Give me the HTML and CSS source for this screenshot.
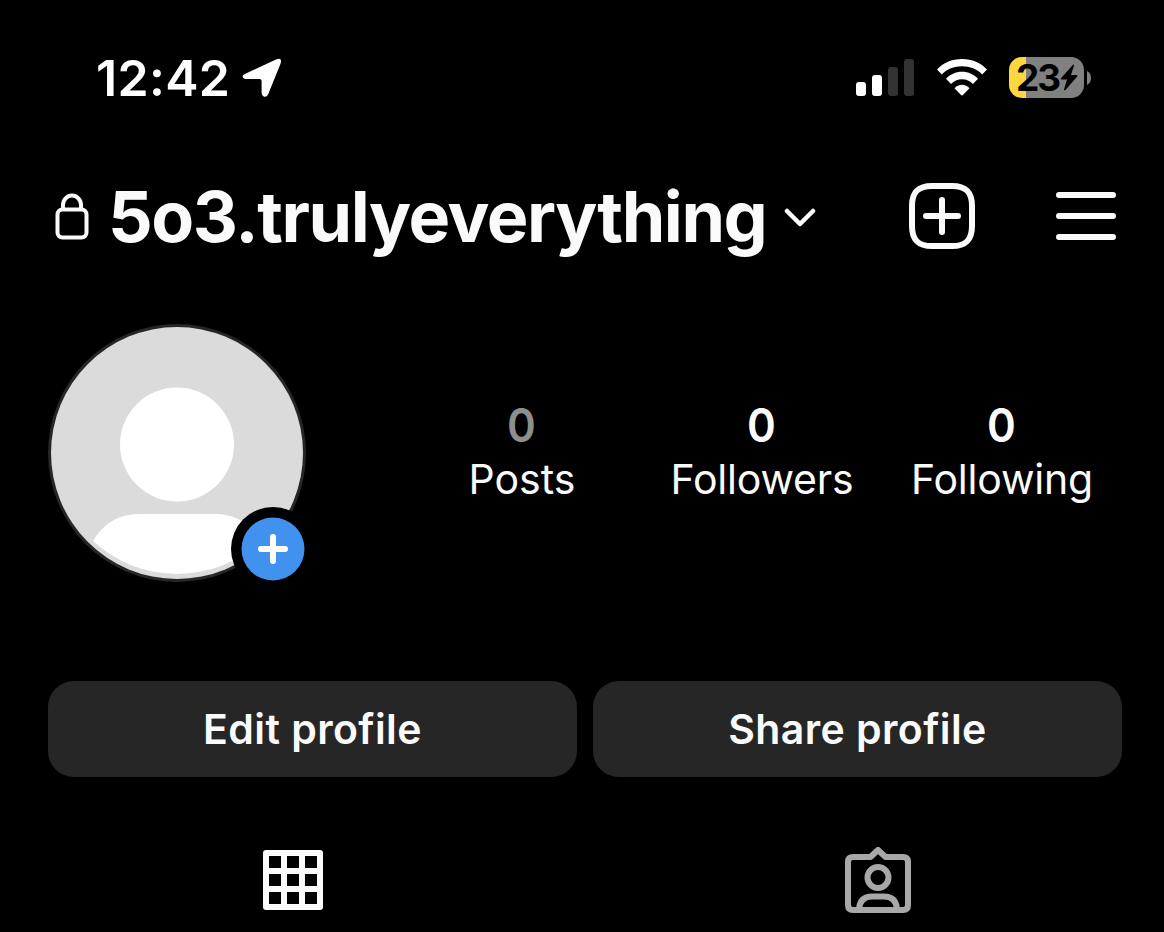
FILE: index.html
```html
<!DOCTYPE html>
<html lang="en">
<head>
<meta charset="utf-8">
<title>Profile</title>
<link rel="stylesheet" href="styles.css">
</head>
<body>
<div class="screen">
  <div class="status">
    <span class="time">12:42</span>
    <svg class="location" width="40" height="40" viewBox="0 0 40 40"><path d="M4.500 15.200 34 1.500Q40.700 -.900 38.500 5.700L26.200 36.200Q24.900 39.200 22 38.700 19.600 38 19.600 35V23Q19.600 21 17.600 21H4Q.800 20.800 .500 18 .800 16.700 4.500 15.200Z" fill="#fff"/></svg>
    <div class="indicators">
      <svg width="58" height="37" viewBox="0 0 58 37">
        <g fill="#fff"><rect y="23" width="10" height="14" rx="3"/><rect x="16" y="16" width="10" height="21" rx="3"/></g>
        <g fill="#333"><rect x="32" y="8" width="10" height="29" rx="3"/><rect x="48" width="10" height="37" rx="3"/></g>
      </svg>
      <svg width="52" height="38" viewBox="0 0 52 38" fill="#fff">
        <path d="M26 0C36 0 45 4 51 10.500L46.200 15.500C41 10 34 7.300 26 7.300S11 10 5.800 15.500L1 10.500C7 4 16 0 26 0Z"/>
        <path d="M26 12.800C32.400 12.800 38 15.500 42 19.800L37 25C34 21.800 30.300 20.200 26 20.200S18 21.800 15 25L10 19.800C14 15.500 19.600 12.800 26 12.800Z"/>
        <path d="M26 25.800C29 25.800 31.500 27 33.500 29.200L27.200 35.800Q26 37 24.800 35.800L18.500 29.200C20.500 27 23 25.800 26 25.800Z"/>
      </svg>
      <div class="battery">
        <div class="battery-body"><span class="level">23</span><svg width="18" height="27" viewBox="0 0 18 27"><path d="M13 .700 1 14.200Q.200 15.600 1.500 15.600H7L4 25.200Q4 27 5.500 26L17.200 12.400Q18 11 16.500 11H11L14 1.500Q14.100 0 13 .700Z"/></svg></div>
        <svg width="4" height="14" viewBox="0 0 4 14"><path d="M0 0Q4 2 4 7T0 14Z" fill="#808080"/></svg>
      </div>
    </div>
  </div>

  <header class="header">
    <svg class="lock" width="34" height="48" viewBox="0 0 34 48" fill="none" stroke="#fafafa" stroke-width="4"><rect x="2.500" y="16.500" width="29" height="28" rx="5"/><path d="M8 16V12A9 9.500 0 0 1 26 12V16"/></svg>
    <h1 class="username">5o3.trulyeverything</h1>
    <svg class="chevron" width="32" height="20" viewBox="0 0 32 20" fill="none" stroke="#fafafa" stroke-width="4.500" stroke-linecap="round" stroke-linejoin="round"><path d="M3 3 16 16 29 3"/></svg>
    <div class="actions">
      <svg width="66" height="66" viewBox="0 0 66 66" fill="none" stroke="#fafafa" stroke-width="6" stroke-linecap="round"><path d="M3 23C3 9 9 3 23 3H43C57 3 63 9 63 23V43C63 57 57 63 43 63H23C9 63 3 57 3 43ZM33 17V49M17 33H49"/></svg>
      <svg width="60" height="48" viewBox="0 0 60 48" stroke="#fafafa" stroke-width="6" stroke-linecap="round"><path d="M3 3H57M3 24H57M3 45H57"/></svg>
    </div>
  </header>

  <section class="profile">
    <svg class="avatar" width="258" height="258" viewBox="0 0 258 258">
      <circle cx="129" cy="129" r="129" fill="#262626"/>
      <circle cx="129" cy="129" r="126" fill="#dbdbdb"/>
      <circle cx="129" cy="120.500" r="57" fill="#fff"/>
      <path d="M45 217Q61 190 91 190H167Q197 190 213 217A123.400 123.400 0 0 1 45 217Z" fill="#fff"/>
      <circle cx="225" cy="225" r="42"/>
      <circle cx="225" cy="225" r="31.500" fill="#4192ef"/>
      <path d="M225 213V237M213 225H237" stroke="#fff" stroke-width="6" stroke-linecap="round"/>
    </svg>
    <div class="stats">
      <div class="stat"><span class="count empty">0</span><span class="label">Posts</span></div>
      <div class="stat"><span class="count">0</span><span class="label long">Followers</span></div>
      <div class="stat"><span class="count">0</span><span class="label long">Following</span></div>
    </div>
  </section>

  <div class="buttons">
    <button class="button" type="button">Edit profile</button>
    <button class="button" type="button">Share profile</button>
  </div>

  <nav class="tabs">
    <div class="tab"><svg width="60" height="60" viewBox="0 0 60 60"><path fill="#fafafa" fill-rule="evenodd" d="M3 0H57Q60 0 60 3V57Q60 60 57 60H3Q0 60 0 57V3Q0 0 3 0ZM6 6V18H18V6ZM24 6V18H36V6ZM42 6V18H54V6ZM6 24V36H18V24ZM24 24V36H36V24ZM42 24V36H54V24ZM6 42V54H18V42ZM24 42V54H36V42ZM42 42V54H54V42Z"/></svg></div>
    <div class="tab"><svg width="66" height="66" viewBox="0 0 66 66" fill="none" stroke="#a8a8a8" stroke-width="6" stroke-linejoin="round"><path d="M8 10H25.500L33 3 40.500 10H58Q63 10 63 15V58Q63 63 58 63H8Q3 63 3 58V15Q3 10 8 10Z"/><circle cx="33" cy="30.500" r="10.500"/><path d="M14 62Q15 49.500 27 49.500H39Q51 49.500 52 62"/></svg></div>
  </nav>
</div>
</body>
</html>
```

FILE: styles.css
```css
* { box-sizing: border-box; }
body { margin: 0; background: #000; color: #fafafa; font-family: Inter, "Liberation Sans", sans-serif; }
svg { display: block; flex: none; }
.screen { width: 1164px; height: 932px; overflow: hidden; background: #000; }

.status { display: flex; align-items: center; height: 156px; padding: 0 73px 0 96px; color: #fff; }
.time { width: 146px; font-size: 50px; font-weight: 600; line-height: 60px; letter-spacing: 0.3px; white-space: nowrap; }
.indicators { display: flex; align-items: center; gap: 22px; margin-left: auto; padding-bottom: 1px; }
.battery { display: flex; align-items: center; gap: 3px; margin-left: -1px; }
.battery-body { display: flex; align-items: center; gap: 2px; width: 75px; height: 41px; padding-left: 7px; border-radius: 13px; background: linear-gradient(90deg, #fdd73f 17px, #808080 17px); color: #000; }
.level { width: 42px; font-size: 37px; font-weight: 700; line-height: 41px; letter-spacing: -2px; }

.header { display: flex; align-items: center; height: 120px; padding: 0 48px 0 55px; }
.lock { margin: 2px 19px 0 0; }
.username { width: 676px; margin: 0; padding-top: 1px; font-size: 70px; font-weight: 700; line-height: 84px; letter-spacing: -1.4px; white-space: nowrap; }
.chevron { margin-top: 3px; }
.actions { display: flex; align-items: center; gap: 81px; margin-left: auto; }

.profile { display: flex; height: 405px; padding: 48px 42px 0 48px; }
.stats { display: grid; grid-template-columns: repeat(3, 240px); margin-left: auto; align-content: start; padding-top: 73px; }
.stat { display: flex; flex-direction: column; align-items: center; }
.count { font-size: 47px; font-weight: 600; line-height: 56px; transform: scaleX(0.93); }
.label { padding-top: 1px; font-size: 41px; line-height: 50px; }
.long { letter-spacing: -0.2px; }
.empty { color: #8e8e8e; }

.buttons { display: grid; grid-template-columns: 529px 529px; gap: 16px; padding-left: 48px; }
.button { height: 96px; padding: 0; border: 0; border-radius: 26px; background: #262626; color: #fafafa; font: 600 41px/48px Inter, "Liberation Sans", sans-serif; letter-spacing: 0.42px; }

.tabs { display: grid; grid-template-columns: 585px 585px; height: 155px; padding-top: 51px; }
.tab { display: flex; align-items: center; justify-content: center; height: 104px; }
```
